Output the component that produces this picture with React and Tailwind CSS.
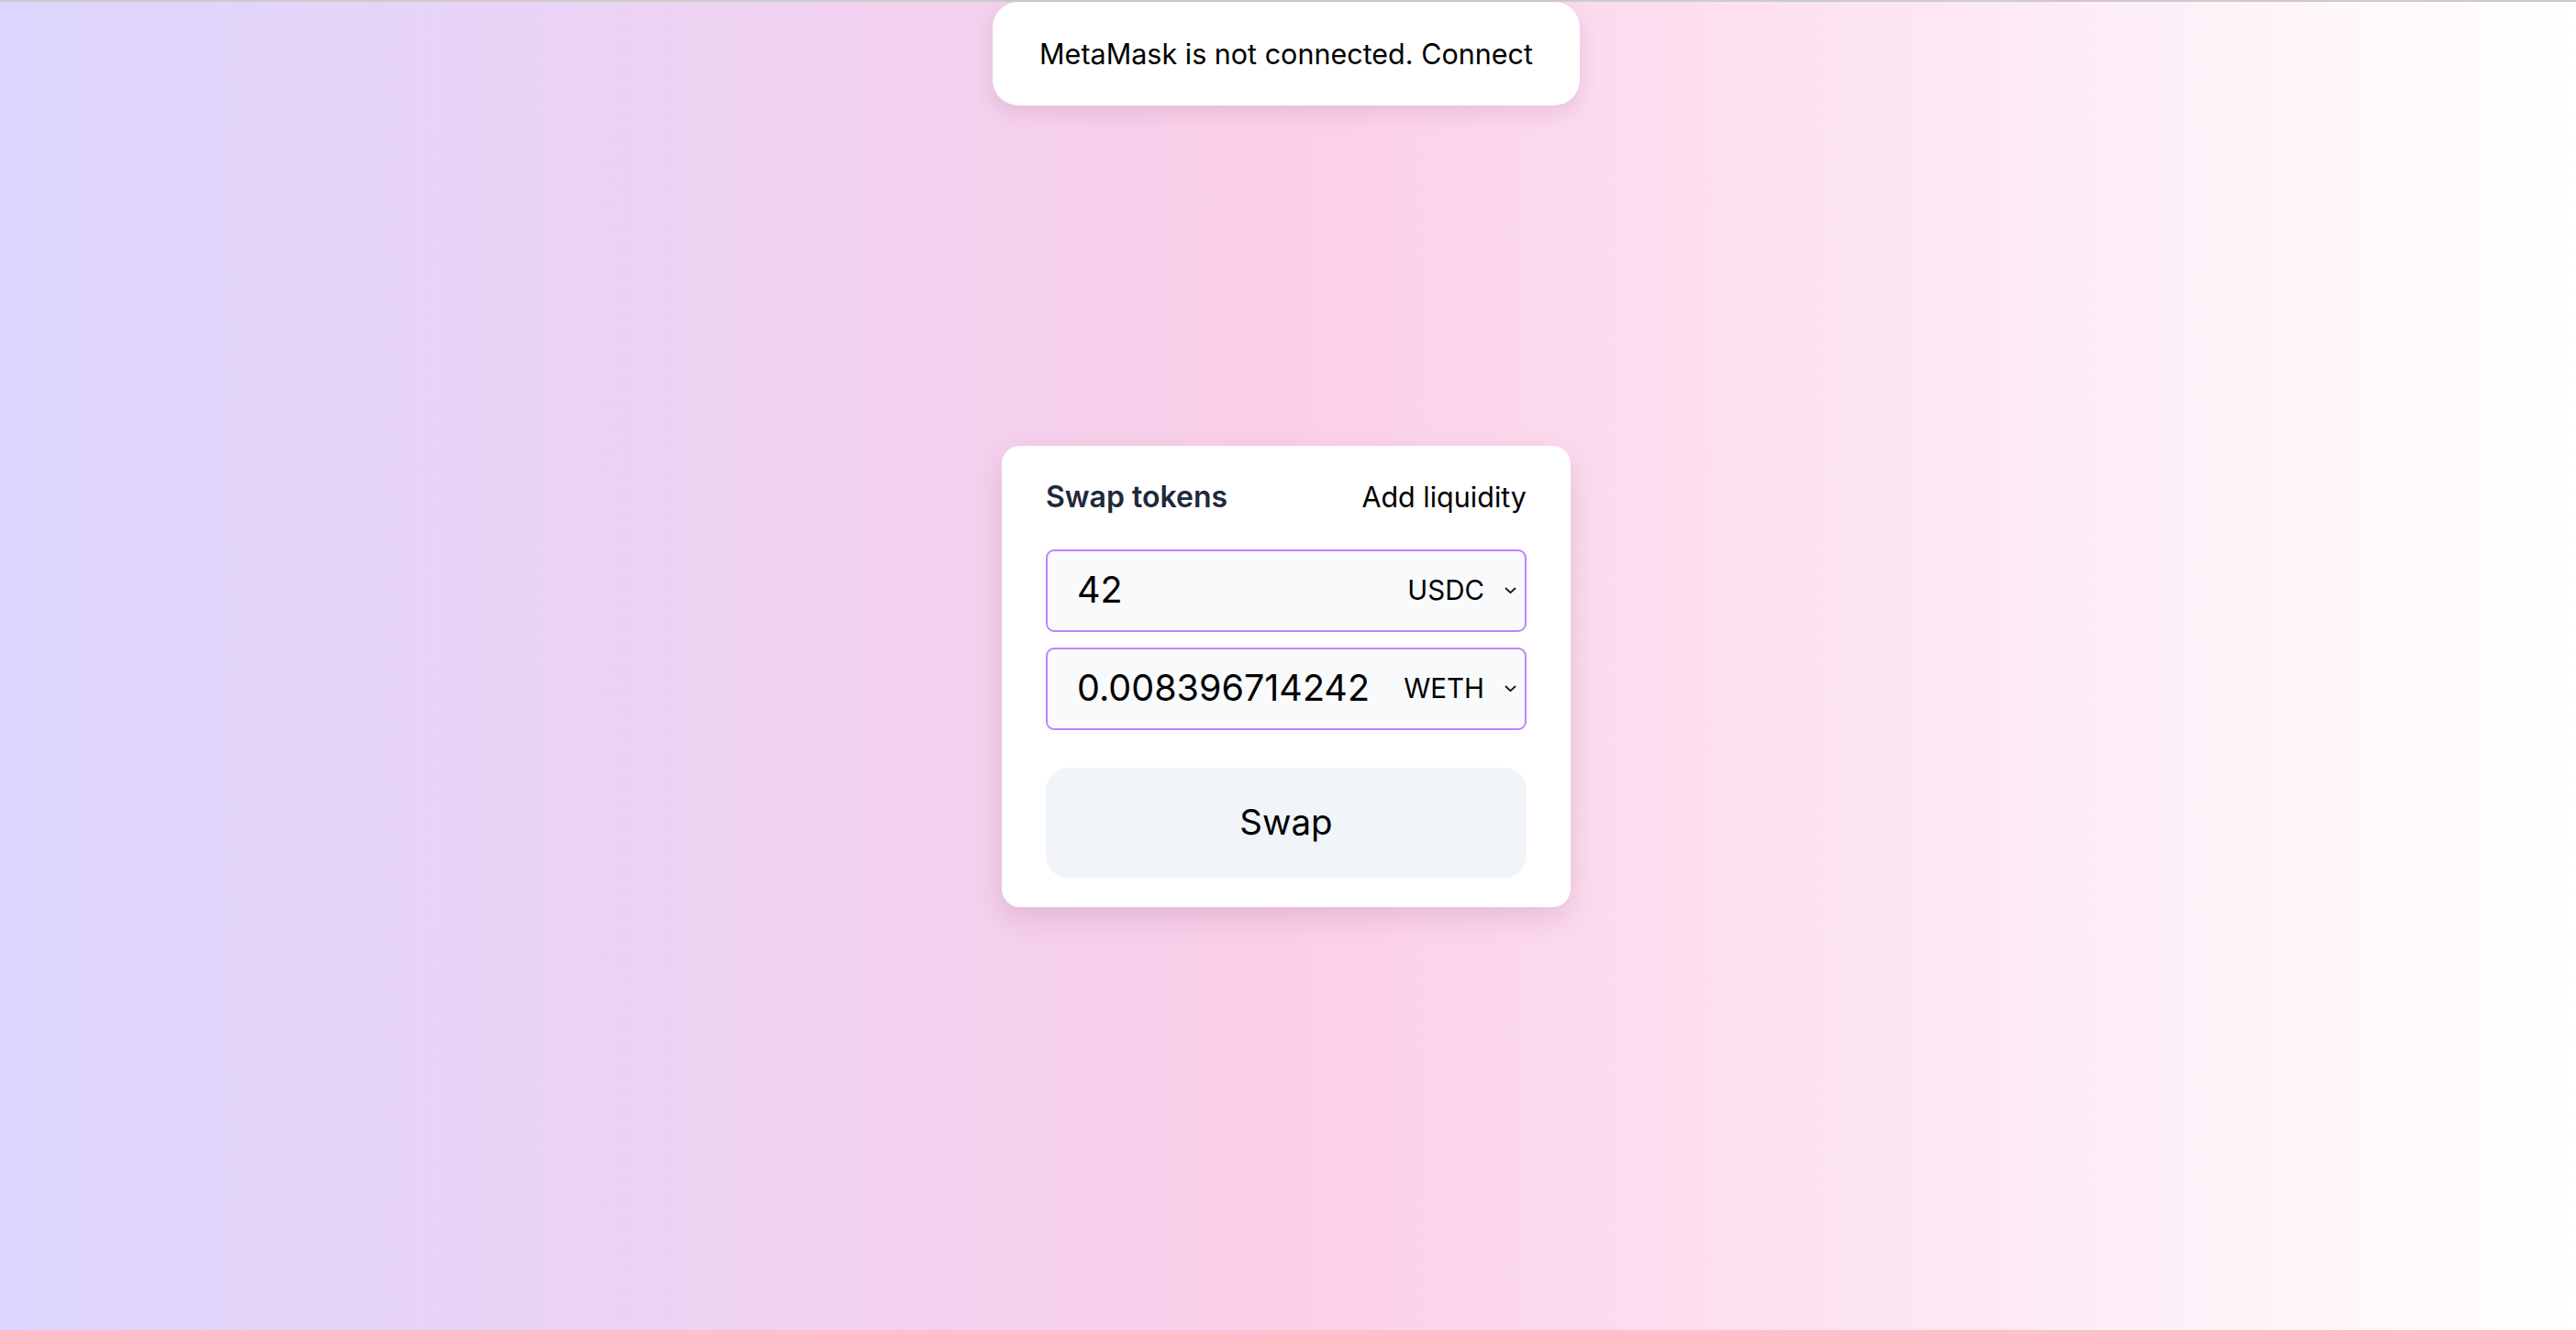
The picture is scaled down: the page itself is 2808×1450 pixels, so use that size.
import React from "react";

function Chevron() {
  return (
    <svg width="13" height="8" viewBox="0 0 13 8" fill="none" className="shrink-0">
      <path d="M1.5 1.5 L6.5 6.2 L11.5 1.5" stroke="#111" strokeWidth="1.8" strokeLinecap="round" strokeLinejoin="round" />
    </svg>
  );
}

function TokenInput({ value, token }) {
  return (
    <div className="flex h-[90px] items-center rounded-[9px] border-2 border-[#c084fc] bg-[#f8fafc] pl-[32px] pr-[9px]">
      <div className="flex-1 text-[39.5px] leading-none text-black">{value}</div>
      <div className="flex items-center gap-[22px] text-[29.5px] text-black">
        <span>{token}</span>
        <Chevron />
      </div>
    </div>
  );
}

export default function App() {
  return (
    <div
      className="relative box-border flex min-h-screen items-center justify-center border-t-2 border-[#cbcbcb] pt-[22px] pr-[4px] bg-[linear-gradient(to_right,#ddd6fe,#fbcfe8,#ffffff)]"
      style={{ fontFamily: "Inter, 'Noto Sans', sans-serif" }}
    >
      <div className="absolute inset-x-0 top-0 flex justify-center pr-[4px]">
        <div className="flex h-[113px] w-[640px] items-center justify-center rounded-[28px] bg-white text-[30.5px] text-black shadow-[0_8px_22px_rgba(120,60,100,0.14)]">
          MetaMask is not connected. Connect
        </div>
      </div>

      <div className="box-border w-[620px] rounded-[20px] bg-white px-[48px] pt-[35px] pb-[32px] shadow-[0_12px_30px_rgba(120,60,100,0.16)]">
        <div className="flex h-[42px] items-center justify-between">
          <span className="text-[32px] font-semibold text-[#1e293b]">Swap tokens</span>
          <span className="text-[30.5px] text-black">Add liquidity</span>
        </div>

        <div className="mt-[36px] flex flex-col gap-[17px]">
          <TokenInput value="42" token="USDC" />
          <TokenInput value="0.008396714242" token="WETH" />
        </div>

        <button className="mt-[41px] flex h-[120px] w-full items-center justify-center rounded-[24px] bg-[#f1f5f9] text-[38.5px] text-black">
          Swap
        </button>
      </div>
    </div>
  );
}
